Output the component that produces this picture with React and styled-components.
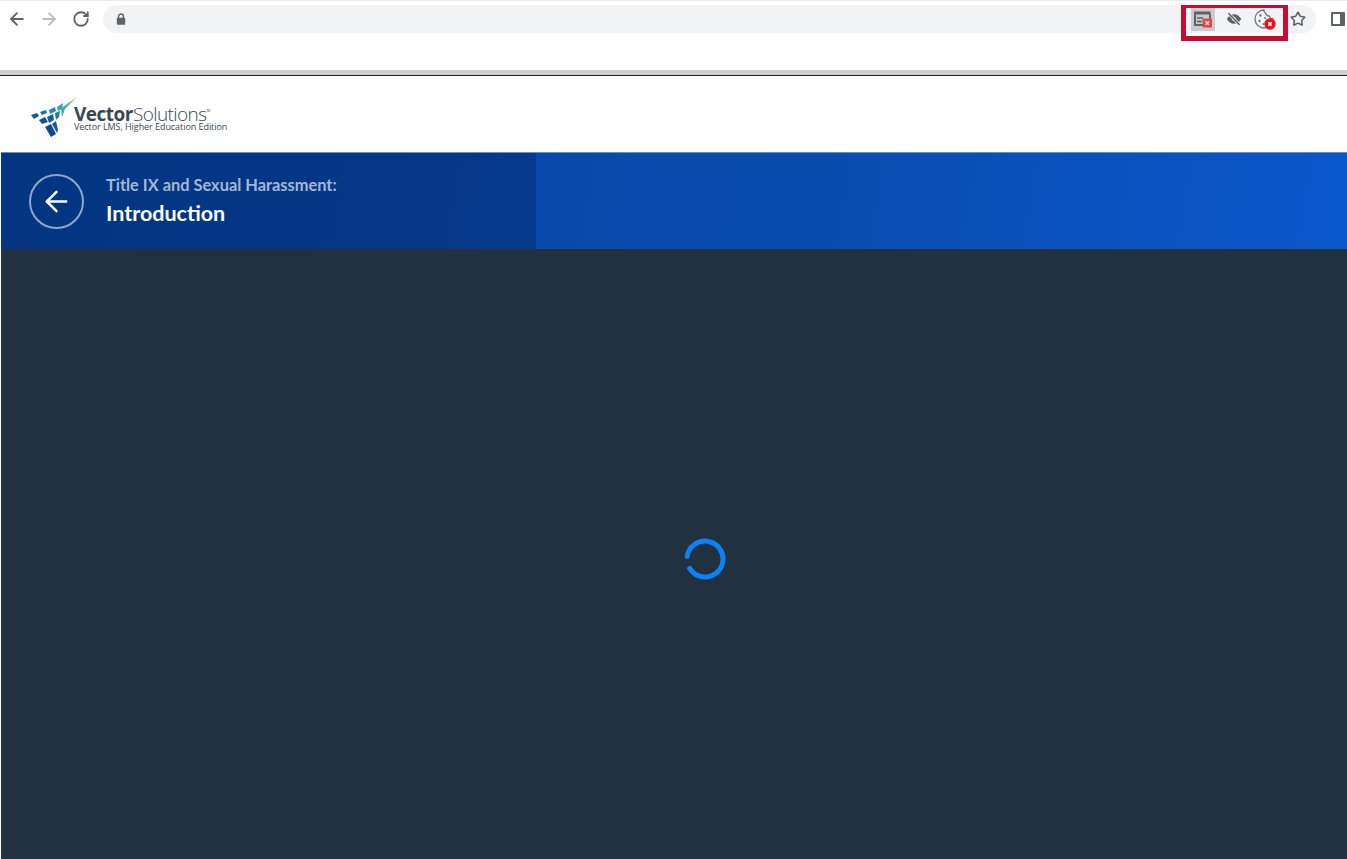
import React from 'react';
import styled, { createGlobalStyle } from 'styled-components';
import { ArrowLeft, ArrowRight, RotateCw, Star } from 'lucide-react';

const Global = createGlobalStyle`
  html, body { margin: 0; padding: 0; height: 100%; background: #fff; overflow: hidden; }
  #root { height: 100%; }
`;

const Page = styled.div`
  display: flex;
  flex-direction: column;
  height: 859px;
  font-family: Lato, "Open Sans", sans-serif;
`;

const Browser = styled.div`
  height: 75px;
  box-sizing: border-box;
  padding: 4px 0 0 5px;
  background: #fff;
  border-top: 1px solid #ececec;
  border-bottom: 5px solid #cfcfcf;
  box-shadow: 0 1px 0 #222;
  flex: none;
  z-index: 1;
`;

const Toolbar = styled.div`
  display: flex;
  align-items: center;
  height: 28px;
`;

const NavButton = styled.span`
  width: 24px;
  height: 24px;
  margin-right: 8px;
  display: flex;
  align-items: center;
  justify-content: center;
  color: ${(p) => (p.$off ? '#bdbdbf' : '#5f6368')};
`;

const Omnibox = styled.div`
  width: 1213px;
  height: 28px;
  margin-left: 2px;
  box-sizing: border-box;
  padding: 0 10px 0 13px;
  border-radius: 14px;
  background: #f1f3f4;
  display: flex;
  align-items: center;
  color: #5f6368;
  position: relative;
`;

const Highlight = styled.div`
  position: absolute;
  left: 1078px;
  top: 0;
  width: 107px;
  height: 36px;
  box-sizing: border-box;
  border: 5px solid #c60c30;
  border-top-width: 3px;
`;

const Extensions = styled.div`
  margin-left: auto;
  display: flex;
  align-items: center;
`;

const Ext = styled.span`
  width: 24px;
  height: 24px;
  margin-right: ${(p) => p.$gap || 0}px;
  display: flex;
  align-items: center;
  justify-content: center;
  background: ${(p) => (p.$active ? '#c9cbcc' : 'transparent')};
  color: #5f6368;
`;

const SidePanel = styled.span`
  margin-left: 15px;
  width: 14px;
  height: 14px;
  box-sizing: border-box;
  border: 2px solid #5f6368;
  border-right-width: 5px;
  border-radius: 1px;
`;

const LogoBar = styled.header`
  height: 77px;
  flex: none;
  padding: 22px 0 0 31px;
  box-sizing: border-box;
  display: flex;
  background: #fff;
`;

const Mark = styled.svg`
  flex: none;
  margin-right: -3px;
`;

const LogoText = styled.div`
  display: flex;
  flex-direction: column;
  color: #3a4750;
  padding-top: 9px;
`;

const Brand = styled.div`
  font-size: 19px;
  line-height: 16px;
  letter-spacing: -0.5px;
  font-weight: 700;
  font-family: "Open Sans", sans-serif;
  & span { font-weight: 300; letter-spacing: -0.6px; }
  & sup { font-size: 3px; vertical-align: 9px; line-height: 0; font-weight: 400; }
`;

const Edition = styled.div`
  font-size: 9px;
  line-height: 10px;
  font-family: "Open Sans", sans-serif;
  letter-spacing: -0.06px;
`;

const Banner = styled.section`
  height: 97px;
  flex: none;
  margin-left: 1px;
  display: flex;
  background: linear-gradient(100deg, #0644a2 0%, #094cb0 60%, #0a57cc 100%);
  border-top: 1px solid #6b8fc0;
  box-sizing: border-box;
`;

const BannerLeft = styled.div`
  width: 535px;
  display: flex;
  align-items: center;
  gap: 22px;
  padding: 0 0 0 28px;
  box-sizing: border-box;
  background: linear-gradient(100deg, #033580 0%, #043a8c 100%);
`;

const BackCircle = styled.span`
  width: 55px;
  height: 55px;
  box-sizing: border-box;
  border: 2px solid #8ea6cb;
  border-radius: 50%;
  display: flex;
  align-items: center;
  justify-content: center;
  color: #fff;
`;

const Titles = styled.div`
  display: flex;
  flex-direction: column;
  gap: 5px;
  margin-top: -4px;
`;

const Course = styled.div`
  font-size: 16.4px;
  line-height: 22px;
  font-weight: 700;
  color: #a3b6d6;
`;

const Lesson = styled.div`
  font-size: 21.5px;
  line-height: 24px;
  font-weight: 700;
  color: #fff;
`;

const Stage = styled.main`
  flex: 1;
  margin-left: 1px;
  background: #223140;
  display: flex;
  align-items: center;
  justify-content: center;
  padding: 10px 0 0 62px;
`;

const Spinner = styled.svg`
  width: 42px;
  height: 42px;
  display: block;
`;

function LockIcon() {
  return (
    <svg width="10" height="12" viewBox="0 0 10 12">
      <path d="M2.500 5V3.500a2.500 2.500 0 0 1 5 0V5" fill="none" stroke="#5f6368" strokeWidth="1.400" />
      <rect x="0.800" y="4.800" width="8.400" height="7" rx="0.800" fill="#5f6368" />
    </svg>
  );
}

function BlockedWindowIcon() {
  return (
    <svg width="24" height="24" viewBox="0 0 24 24">
      <path d="M3 4.500h16.500v3H3z" fill="#5f6368" />
      <path d="M4 7v11h15V7" fill="none" stroke="#5f6368" strokeWidth="2" />
      <path d="M6 11h6M6 14.500h5" stroke="#5f6368" strokeWidth="1.600" />
      <rect x="11.500" y="11.500" width="9.500" height="9" fill="#e04848" />
      <path d="M14.500 14.300l3.400 3.400M17.900 14.300l-3.400 3.400" stroke="#f6dcdc" strokeWidth="1.500" />
    </svg>
  );
}

function HiddenEyeIcon() {
  return (
    <svg width="16" height="14" viewBox="0 0 16 14">
      <path d="M0.800 7C2.500 3.800 5 2.200 8 2.200s5.500 1.600 7.200 4.800c-1.700 3.200-4.200 4.800-7.200 4.800S2.500 10.200 0.800 7z" fill="#5f6368" />
      <circle cx="8" cy="7" r="2" fill="#f1f3f4" />
      <path d="M2.500 1.200l11 11.600" stroke="#f1f3f4" strokeWidth="3" />
      <path d="M2.500 1.200l11 11.600" stroke="#5f6368" strokeWidth="1.500" />
    </svg>
  );
}

function CookieIcon() {
  return (
    <svg width="24" height="24" viewBox="0 0 24 24">
      <path
        d="M11 3a9 9 0 1 0 9 9 3.500 3.500 0 0 1-3.500-3 3.500 3.500 0 0 1-3.800-2.800A3 3 0 0 1 11 3z"
        fill="none"
        stroke="#70757a"
        strokeWidth="1.300"
      />
      <circle cx="7.500" cy="8.500" r="1.200" fill="#70757a" />
      <circle cx="6.500" cy="14" r="1.200" fill="#70757a" />
      <circle cx="12" cy="11" r="1" fill="#70757a" />
      <circle cx="10.500" cy="17" r="1" fill="#70757a" />
      <circle cx="17" cy="17" r="5.700" fill="#f20d1a" />
      <path d="M15.300 15.300l3.400 3.400M18.700 15.300l-3.400 3.400" stroke="#fff" strokeWidth="1.500" />
    </svg>
  );
}

function VectorMark() {
  return (
    <Mark width="46" height="40" viewBox="0 0 46 40">
      <defs>
        <linearGradient id="leaf" x1="0" y1="1" x2="1" y2="0">
          <stop offset="0" stopColor="#25a5bd" />
          <stop offset="1" stopColor="#a5d155" />
        </linearGradient>
      </defs>
      <path d="M0 18l6-2 2 3-5 3z" fill="#14589f" />
      <path d="M9 15l6-2 1 3-5 2z" fill="#1a6db2" />
      <path d="M18 13l6-3 1 4-6 3z" fill="#2086c2" />
      <path d="M26 10l6-4-1 6-4 2z" fill="#2fa3c4" />
      <path d="M8 23l6-3 3 5-6 2z" fill="#124f96" />
      <path d="M16 20l6-3 1 6-5 3z" fill="#165fa6" />
      <path d="M24 16l5-2-1 6-3 3z" fill="#1d78ba" />
      <path d="M14 30l6-3 5 10-5 3z" fill="#104a90" />
      <path d="M21 27l4-3 2 9-1 3z" fill="#14589f" />
      <path d="M30 11L46 0 34 12 31 20z" fill="url(#leaf)" />
    </Mark>
  );
}

export default function App() {
  return (
    <Page>
      <Global />
      <Browser>
        <Toolbar>
          <NavButton><ArrowLeft size={20} strokeWidth={2.2} /></NavButton>
          <NavButton $off><ArrowRight size={20} strokeWidth={2.2} /></NavButton>
          <NavButton><RotateCw size={18} strokeWidth={2.4} /></NavButton>
          <Omnibox>
            <LockIcon />
            <Highlight />
            <Extensions>
              <Ext $active $gap={7}><BlockedWindowIcon /></Ext>
              <Ext $gap={7}><HiddenEyeIcon /></Ext>
              <Ext $gap={13}><CookieIcon /></Ext>
              <Star size={16} strokeWidth={2.400} />
            </Extensions>
          </Omnibox>
          <SidePanel />
        </Toolbar>
      </Browser>
      <LogoBar>
        <VectorMark />
        <LogoText>
          <Brand>Vector<span>Solutions</span><sup>TM</sup></Brand>
          <Edition>Vector LMS, Higher Education Edition</Edition>
        </LogoText>
      </LogoBar>
      <Banner>
        <BannerLeft>
          <BackCircle><ArrowLeft size={33} strokeWidth={1.8} /></BackCircle>
          <Titles>
            <Course>Title IX and Sexual Harassment:</Course>
            <Lesson>Introduction</Lesson>
          </Titles>
        </BannerLeft>
      </Banner>
      <Stage>
        <Spinner viewBox="0 0 42 42">
          <circle
            cx="21"
            cy="21"
            r="18"
            fill="none"
            stroke="#0a84f5"
            strokeWidth="5"
            strokeLinecap="round"
            strokeDasharray="100 13"
            transform="rotate(188 21 21)"
          />
        </Spinner>
      </Stage>
    </Page>
  );
}
